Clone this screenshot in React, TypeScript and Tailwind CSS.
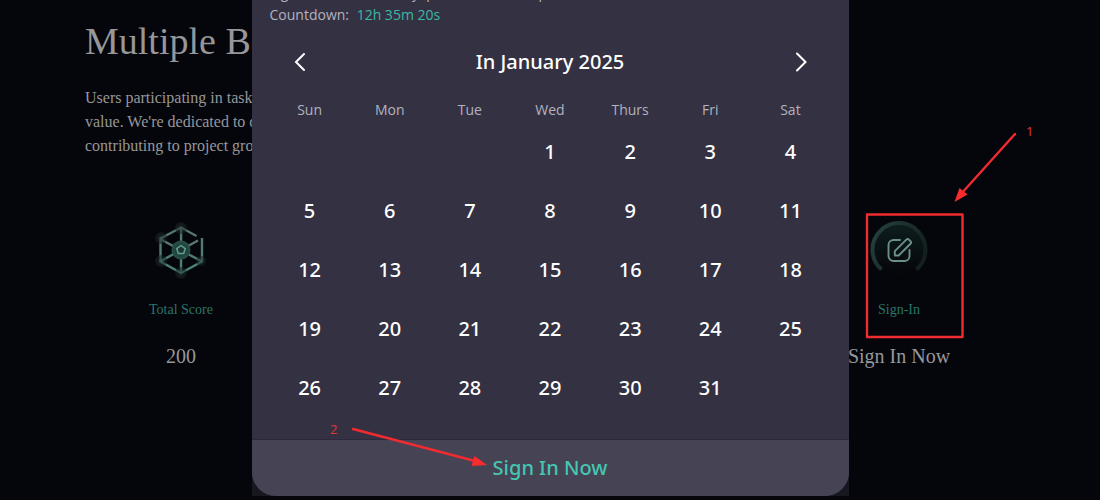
import type { ReactNode } from "react";
import { useState } from "react";

const weekdays = ["Sun", "Mon", "Tue", "Wed", "Thurs", "Fri", "Sat"];

const weeks: (number | null)[][] = [
  [null, null, null, 1, 2, 3, 4],
  [5, 6, 7, 8, 9, 10, 11],
  [12, 13, 14, 15, 16, 17, 18],
  [19, 20, 21, 22, 23, 24, 25],
  [26, 27, 28, 29, 30, 31, null],
];

function ScoreIcon() {
  return (
    <svg width="64" height="64" viewBox="0 0 64 64" fill="none" aria-hidden="true">
      <defs>
        <linearGradient id="score-line" gradientUnits="userSpaceOnUse" x1="0" y1="8" x2="0" y2="56">
          <stop offset="0" stopColor="#587472" />
          <stop offset="1" stopColor="#4a8478" />
        </linearGradient>
        <radialGradient id="score-core">
          <stop offset="0" stopColor="#16322f" />
          <stop offset="1" stopColor="#28504a" />
        </radialGradient>
        <radialGradient id="score-node">
          <stop offset="0" stopColor="#2c3f3d" stopOpacity="0.9" />
          <stop offset="1" stopColor="#141d1e" stopOpacity="0.9" />
        </radialGradient>
      </defs>
      <g stroke="url(#score-line)" strokeWidth="2.4">
        <path d="M47.500 18 32 9.500 11.500 20.500V43.500L32 55 53 43.500V20" />
        <path d="M32.100 11 32 53M12 21.500 52 43M12 43 49 22.500" />
      </g>
      <g fill="url(#score-node)" fillOpacity="0.6">
        <circle cx="32" cy="10" r="6" />
        <circle cx="32" cy="55" r="6" />
        <circle cx="12" cy="20" r="6" />
        <circle cx="12" cy="43" r="6" />
        <circle cx="52" cy="43" r="5" />
      </g>
      <circle cx="32" cy="32" r="9.500" fill="url(#score-core)" />
      <path d="M32 27.500 36.300 30.600 34.700 35.500H29.300L27.700 30.600Z" stroke="#629d93" strokeWidth="1.500" strokeLinejoin="round" />
    </svg>
  );
}

function SignInIcon() {
  return (
    <svg width="64" height="64" viewBox="0 0 64 64" fill="none" aria-hidden="true">
      <defs>
        <linearGradient id="dial-ring" x1="0" y1="0" x2="1" y2="0.5">
          <stop offset="0" stopColor="#264340" />
          <stop offset="1" stopColor="#14201f" />
        </linearGradient>
        <linearGradient id="dial-fill" x1="0" y1="0" x2="0" y2="1">
          <stop offset="0" stopColor="#0d1d1d" />
          <stop offset="0.9" stopColor="#05070b" />
        </linearGradient>
      </defs>
      <circle cx="32" cy="32" r="25" fill="url(#dial-fill)" />
      <path d="M14.500 51.500A26.500 26.500 0 1 1 49.500 51.500" stroke="url(#dial-ring)" strokeWidth="4" />
      <g stroke="#6a9089" strokeWidth="1.900" strokeLinejoin="round" strokeLinecap="round">
        <path d="M33 22H26.500a5 5 0 0 0-5 5V38a5 5 0 0 0 5 5H37.500a5 5 0 0 0 5-5V32" />
        <path d="M27.800 37.500V33.200L39.600 21.400a1.400 1.400 0 0 1 2 0l2.100 2.100a1.400 1.400 0 0 1 0 2L31.700 37.500Z" />
      </g>
    </svg>
  );
}

function StatCard({ icon, label, value }: { icon: ReactNode; label: string; value: string }) {
  return (
    <div className="flex w-48 flex-col items-center">
      {icon}
      <p className="mt-4 text-sm leading-6 text-[#2a7568]">{label}</p>
      <p className="mt-5 text-xl leading-7 text-[#97979a]">{value}</p>
    </div>
  );
}

function Chevron({ direction }: { direction: "left" | "right" }) {
  return (
    <svg width="12" height="20" viewBox="0 0 12 20" fill="none" stroke="#fff" strokeWidth="2" aria-hidden="true">
      <path d={direction === "left" ? "M10 2 2 10 10 18" : "M2 1.500 10.500 10 2 18.500"} strokeLinecap="round" />
    </svg>
  );
}

function SignInModal({ onSignIn }: { onSignIn: () => void }) {
  return (
    <section className="w-full max-w-[597px] bg-[#17171f]" role="dialog" aria-label="Sign in calendar">
      <div className="overflow-hidden rounded-b-3xl bg-[#343143]">
        <div className="px-[18px] font-['Open_Sans',sans-serif] text-sm leading-[22px] text-[#b3b2be]">
          <p>Sign in at least one day, points and other prizes</p>
          <p>
            Countdown: <span className="ml-1 text-[#3db8a5]">12h 35m 20s</span>
          </p>
        </div>

        <div className="mt-[22px] flex h-7 items-center justify-between px-[42px]">
          <button type="button" aria-label="Previous month">
            <Chevron direction="left" />
          </button>
          <h2 className="text-xl font-medium text-white">In January 2025</h2>
          <button type="button" aria-label="Next month">
            <Chevron direction="right" />
          </button>
        </div>

        <div className="px-[18px] py-[22px]">
          <table className="w-full table-fixed text-center">
            <thead className="font-['Open_Sans',sans-serif]">
              <tr>
                {weekdays.map((weekday) => (
                  <th key={weekday} className="h-6 p-0 text-center text-sm font-normal text-[#b3b2be]">
                    {weekday}
                  </th>
                ))}
              </tr>
            </thead>
            <tbody>
              {weeks.map((week, weekIndex) => (
                <tr key={weekIndex}>
                  {week.map((day, dayIndex) => (
                    <td key={dayIndex} className="h-[59px] p-0 text-xl font-medium text-white">
                      {day}
                    </td>
                  ))}
                </tr>
              ))}
            </tbody>
          </table>
        </div>

        <button
          type="button"
          className="block h-[57px] w-full border-t border-[#2b293a] bg-[#454354] text-xl font-medium text-[#46c6b1]"
          onClick={onSignIn}
        >
          Sign In Now
        </button>
      </div>
    </section>
  );
}

function Annotations() {
  return (
    <svg className="pointer-events-none absolute top-0 left-0 z-20" width="1100" height="500" viewBox="0 0 1100 500" fill="none">
      <g stroke="#f02c30" strokeWidth="2.400">
        <rect x="867" y="214.500" width="95.500" height="122.500" strokeLinejoin="round" />
        <path d="M1015 134 961 194M353 429 475 461" strokeLinecap="round" />
      </g>
      <path d="M954.500 202 959.500 188 967.500 194.500ZM487 465 474.500 456 471.500 466Z" fill="#fb2a2c" />
      <g fill="#e23338" fontSize="13" fontFamily="'Open Sans', sans-serif">
        <text x="1026" y="136">1</text>
        <text x="330" y="434">2</text>
      </g>
    </svg>
  );
}

export default function App() {
  const [isModalOpen, setIsModalOpen] = useState(true);

  return (
    <div className="relative min-h-screen overflow-hidden bg-[#05060b] font-['Liberation_Serif',serif]">
      <main className="pt-4 pr-[105px] pl-[85px]">
        <h1 className="text-[38px] leading-[50px] text-[#97979a]">Multiple Benefits</h1>
        <p className="mt-5 max-w-[520px] text-base leading-6 text-[#97979a]">
          Users participating in tasks can gain more
          <br />
          value. We're dedicated to our community and
          <br />
          contributing to project growth.
        </p>
        <div className="mt-15 flex justify-between">
          <StatCard icon={<ScoreIcon />} label="Total Score" value="200" />
          <StatCard icon={<SignInIcon />} label="Sign-In" value="Sign In Now" />
        </div>
      </main>

      {isModalOpen ? (
        <div className="absolute inset-0 z-10 flex flex-col items-center justify-end pb-1 font-['Noto_Sans',sans-serif]">
          <SignInModal onSignIn={() => setIsModalOpen(false)} />
        </div>
      ) : null}

      <Annotations />
    </div>
  );
}
